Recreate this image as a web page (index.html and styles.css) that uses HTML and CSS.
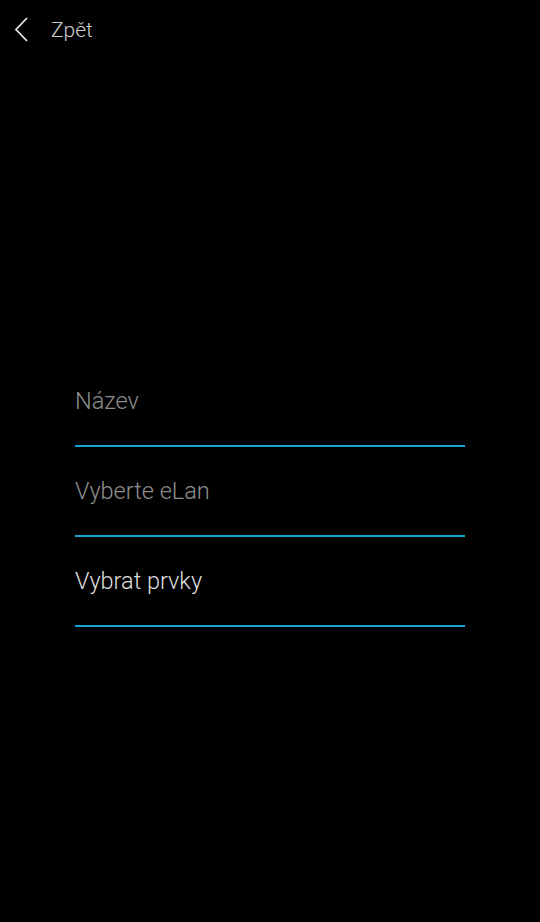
FILE: index.html
```html
<!DOCTYPE html>
<html lang="cs">
<head>
<meta charset="utf-8">
<title>Zpět</title>
<link rel="stylesheet" href="styles.css">
</head>
<body>
<div class="screen">
  <header class="topbar">
    <button class="back">
      <svg class="chev" width="16" height="26" viewBox="0 0 16 26"><path d="M13 1 L2 12.5 L13 24" fill="none" stroke="#e6e6e6" stroke-width="1.8"/></svg>
      <span class="back-label">Zpět</span>
    </button>
  </header>
  <main class="form">
    <div class="field"><span class="label dim">Název</span></div>
    <div class="field"><span class="label dim">Vyberte eLan</span></div>
    <div class="field"><span class="label bright">Vybrat prvky</span></div>
  </main>
</div>
</body>
</html>
```
FILE: styles.css
```css
html, body {
  margin: 0;
  padding: 0;
  background: #000;
}
.screen {
  width: 540px;
  height: 922px;
  background: #000;
  font-family: "Roboto Light", Roboto, "Noto Sans", sans-serif;
  font-weight: 300;
}
.topbar {
  height: 60px;
  display: flex;
  align-items: center;
}
.back {
  display: flex;
  align-items: center;
  background: none;
  border: 0;
  padding: 0 0 0 14px;
  margin: 0;
  gap: 21px;
  font: inherit;
  cursor: pointer;
}
.chev {
  display: block;
}
.back-label {
  color: #cfcfcf;
  font-size: 21px;
  font-weight: 300;
  line-height: 1;
}
.form {
  margin-top: 297px;
  padding: 0 75px;
}
.field {
  height: 90px;
  box-sizing: border-box;
  border-bottom: 2px solid #1ba3d3;
  display: flex;
  align-items: flex-start;
  padding-top: 29px;
}
.label {
  font-size: 23.5px;
  line-height: 30px;
}
.dim {
  color: #8e8e8e;
}
.bright {
  color: #dedede;
}
```
